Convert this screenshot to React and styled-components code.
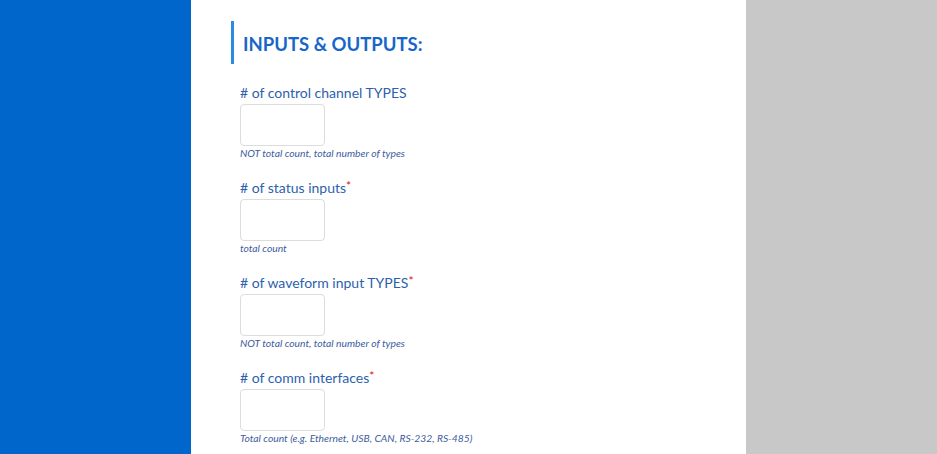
import styled, { createGlobalStyle } from 'styled-components'

const GlobalStyle = createGlobalStyle`
  html, body {
    margin: 0;
    padding: 0;
    height: 100%;
    overflow: hidden;
  }
  body {
    font-family: Lato, 'Open Sans', sans-serif;
  }
`

const Page = styled.div`
  display: grid;
  grid-template-columns: 191px 555px 1fr;
  height: 454px;
`

const SideBlue = styled.div`
  background: #0066cc;
`

const SideGray = styled.div`
  background: #c8c8c8;
`

const Main = styled.main`
  background: #ffffff;
  padding: 21px 0 0 40px;
`

const Heading = styled.h2`
  margin: 0 0 21px;
  height: 43px;
  display: flex;
  align-items: center;
  padding: 2px 0 0 9px;
  box-sizing: border-box;
  border-left: 3px solid #2b8be0;
  font-size: 18.5px;
  font-weight: 700;
  color: #1766c8;
`

const Field = styled.div`
  display: flex;
  flex-direction: column;
  align-items: flex-start;
  padding-left: 9px;
  height: 95px;
`

const Label = styled.label`
  font-size: 14px;
  line-height: 16px;
  margin-bottom: 3px;
  color: #2d5fae;
`

const Star = styled.span`
  color: #e01010;
  font-size: 12px;
  vertical-align: top;
  line-height: 12px;
`

const Box = styled.input`
  box-sizing: border-box;
  width: 85px;
  height: 42px;
  margin: 0;
  border: 1px solid #dcdcdc;
  border-radius: 4px;
  background: #fff;
  outline: none;
`

const Help = styled.small`
  margin-top: 1px;
  font-size: 10.3px;
  font-style: italic;
  line-height: 13px;
  color: #3d5c9e;
`

const fields = [
  { label: '# of control channel TYPES', help: 'NOT total count, total number of types' },
  { label: '# of status inputs', required: true, help: 'total count' },
  { label: '# of waveform input TYPES', required: true, help: 'NOT total count, total number of types' },
  { label: '# of comm interfaces', required: true, help: 'Total count (e.g. Ethernet, USB, CAN, RS-232, RS-485)' },
]

export default function App() {
  return (
    <>
      <GlobalStyle />
      <Page>
        <SideBlue />
        <Main>
          <Heading>INPUTS &amp; OUTPUTS:</Heading>
          {fields.map((f) => (
            <Field key={f.label}>
              <Label>
                {f.label}
                {f.required && <Star>*</Star>}
              </Label>
              <Box type="text" />
              <Help>{f.help}</Help>
            </Field>
          ))}
        </Main>
        <SideGray />
      </Page>
    </>
  )
}
